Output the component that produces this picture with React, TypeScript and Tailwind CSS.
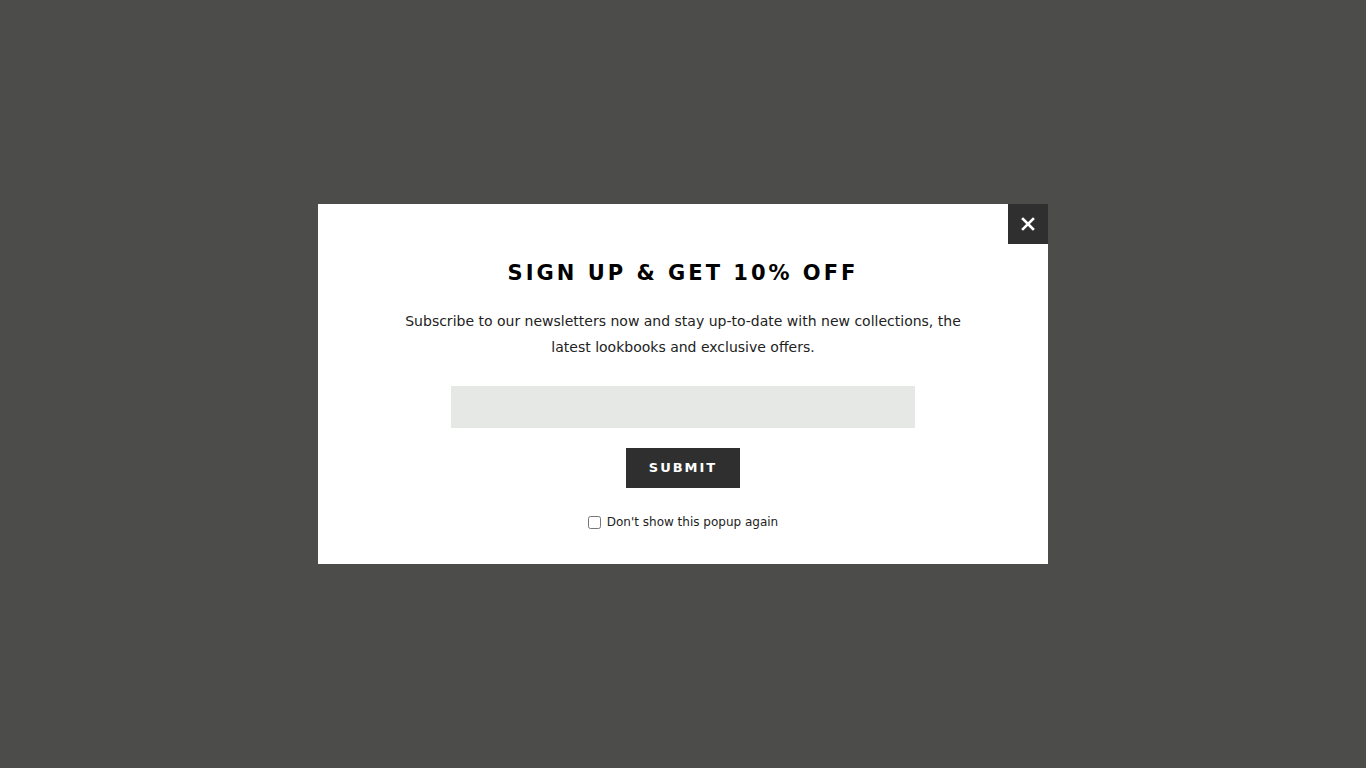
import { useState } from "react";

export default function App() {
  const [email, setEmail] = useState("");
  const [hide, setHide] = useState(false);

  return (
    <div className="flex h-[768px] w-full items-center justify-center bg-[#4c4d4a] font-['DejaVu_Sans',sans-serif]">
      <div className="relative flex h-[360px] w-[730px] flex-col items-center bg-white pt-[56px]">
        <button
          type="button"
          aria-label="Close"
          className="absolute right-0 top-0 grid h-10 w-10 place-items-center bg-[#2f2f2f] text-white"
        >
          <svg width="14" height="14" viewBox="0 0 14 14" fill="none" stroke="currentColor" strokeWidth="2.6" strokeLinecap="square">
            <path d="M2 2l10 10M12 2L2 12" />
          </svg>
        </button>

        <h2 className="text-[21px] font-bold leading-[26px] tracking-[3px] text-black">
          SIGN UP &amp; GET 10% OFF
        </h2>

        <p className="mt-[22px] w-[560px] text-center text-[14px] leading-[26px] text-[#222]">
          Subscribe to our newsletters now and stay up-to-date with new collections, the latest
          lookbooks and exclusive offers.
        </p>

        <form className="mt-[26px] flex flex-col items-center" onSubmit={(e) => e.preventDefault()}>
          <input
            type="email"
            value={email}
            onChange={(e) => setEmail(e.target.value)}
            className="h-[42px] w-[464px] bg-[#e6e8e5] px-3 text-sm outline-none"
          />
          <button
            type="submit"
            className="mt-5 h-10 w-[114px] bg-[#2f2f2f] text-[13px] font-bold tracking-[2px] text-white"
          >
            SUBMIT
          </button>
          <label className="mt-[25px] flex items-center gap-[6px] text-[12px] text-[#222]">
            <input
              type="checkbox"
              checked={hide}
              onChange={(e) => setHide(e.target.checked)}
              className="h-[13px] w-[13px] accent-gray-400"
            />
            Don't show this popup again
          </label>
        </form>
      </div>
    </div>
  );
}
